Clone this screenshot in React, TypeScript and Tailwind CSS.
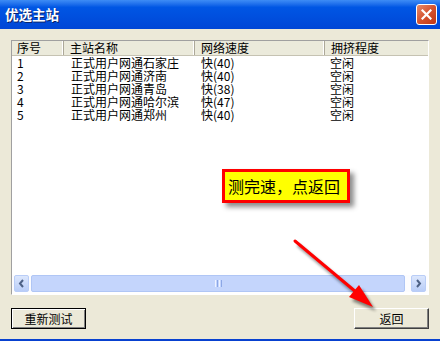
import React from "react";

const rows = [
  { id: "1", name: "正式用户网通石家庄", speed: "快(40)", load: "空闲" },
  { id: "2", name: "正式用户网通济南", speed: "快(40)", load: "空闲" },
  { id: "3", name: "正式用户网通青岛", speed: "快(38)", load: "空闲" },
  { id: "4", name: "正式用户网通哈尔滨", speed: "快(47)", load: "空闲" },
  { id: "5", name: "正式用户网通郑州", speed: "快(40)", load: "空闲" },
];

const cols = "grid grid-cols-[52px_131px_130px_1fr]";

const App: React.FC = () => {
  return (
    <div className="relative w-[440px] h-[341px] overflow-hidden bg-[#ece9d8] font-['SimSun','Noto_Sans_CJK_SC',sans-serif] text-[12px] text-black">
      {/* Title bar */}
      <div className="h-[29px] flex items-center justify-between pl-[5px] pr-[3px] bg-linear-to-b from-[#3d8cf5] via-[#0056e4] via-25% to-[#0046d6]">
        <span className="text-white font-bold text-[13.5px] leading-none [text-shadow:1px_1px_0_#0a246a]">
          优选主站
        </span>
        <div className="w-[21px] h-[21px] rounded-[3px] border border-white bg-linear-to-br from-[#e58a69] via-[#d5522e] to-[#c03512] flex items-center justify-center">
          <svg width="11" height="11" viewBox="0 0 11 11">
            <path d="M1.5 1.5 L9.5 9.5 M9.5 1.5 L1.5 9.5" stroke="white" strokeWidth="2.2" strokeLinecap="square" />
          </svg>
        </div>
      </div>

      {/* Body */}
      <div className="flex flex-col px-[11px] pt-[11px]">
        {/* List */}
        <div className="h-[255px] w-[418px] flex flex-col border border-t-[#a0a0a0] border-l-[#a0a0a0] border-r-white border-b-white bg-white">
          <div className={`${cols} h-[15px] bg-[#ebeadb] border-b border-[#c5c2b2]`}>
            {["序号", "主站名称", "网络速度", "拥挤程度"].map((h, i) => (
              <div
                key={h}
                className={`flex items-center leading-none pb-[1px] ${i === 0 ? "pl-[5px]" : "pl-[6px]"} ${i < 3 ? "border-r border-r-[#aca899] shadow-[inset_-1px_0_0_#ffffff]" : ""}`}
              >
                {h}
              </div>
            ))}
          </div>
          <div className="flex flex-col">
            {rows.map((r) => (
              <div key={r.id} className={`${cols} h-[13px] leading-[13px]`}>
                <div className="pl-[5px]">{r.id}</div>
                <div className="pl-[7px]">{r.name}</div>
                <div className="pl-[6px]">{r.speed}</div>
                <div className="pl-[5px]">{r.load}</div>
              </div>
            ))}
          </div>
          <div className="flex-1" />
          {/* Horizontal scrollbar */}
          <div className="h-[17px] flex items-center gap-[2px] px-[2px] bg-[#fcfcfe] mb-[2px]">
            <div className="w-[15px] h-[17px] rounded-[2px] border border-[#b9cdf7] bg-linear-to-b from-[#dce7fd] to-[#b9cdf7] flex items-center justify-center">
              <svg width="7" height="9" viewBox="0 0 7 9">
                <path d="M5 1 L2 4.5 L5 8" fill="none" stroke="#4d6185" strokeWidth="2" />
              </svg>
            </div>
            <div className="w-[374px] h-[17px] rounded-[2px] border border-[#b0c6f5] bg-[#c4d5fc] flex items-center justify-center">
              <div className="flex gap-[1px]">
                <div className="w-[1px] h-[7px] bg-[#eef3ff]" />
                <div className="w-[1px] h-[7px] bg-[#8ca7e6]" />
                <div className="w-[1px] h-[7px] bg-[#eef3ff]" />
                <div className="w-[1px] h-[7px] bg-[#8ca7e6]" />
              </div>
            </div>
            <div className="flex-1" />
            <div className="w-[15px] h-[17px] rounded-[2px] border border-[#b9cdf7] bg-linear-to-b from-[#dce7fd] to-[#b9cdf7] flex items-center justify-center">
              <svg width="7" height="9" viewBox="0 0 7 9">
                <path d="M2 1 L5 4.5 L2 8" fill="none" stroke="#4d6185" strokeWidth="2" />
              </svg>
            </div>
          </div>
        </div>

        {/* Buttons */}
        <div className="flex justify-between mt-[13px]">
          <button className="w-[75px] h-[21px] border border-black bg-[#ece9d8] shadow-[inset_1px_1px_0_#ffffff,inset_-1px_-1px_0_#808080] text-[12px] leading-none">
            重新测试
          </button>
          <button className="w-[75px] h-[21px] border border-t-white border-l-white border-r-[#404040] border-b-[#404040] bg-[#ece9d8] shadow-[inset_-1px_-1px_0_#808080] text-[12px] leading-none">
            返回
          </button>
        </div>
      </div>

      {/* Bottom window frame */}
      <div className="absolute left-0 right-0 bottom-0 h-[2px] bg-[#0841d0]" />

      {/* Callout */}
      <div className="absolute left-[222px] top-[169px] w-[128px] h-[34px] border-[3px] border-[#ff0000] bg-[#ffff00] shadow-[4px_4px_5px_rgba(0,0,0,0.45)] flex items-center pl-[3px] text-[16px] leading-none">
        测完速，点返回
      </div>

      {/* Arrow */}
      <svg className="absolute inset-0 pointer-events-none" width="440" height="341" viewBox="0 0 440 341">
        <defs>
          <filter id="blur" x="-20%" y="-20%" width="140%" height="140%">
            <feGaussianBlur stdDeviation="1.8" />
          </filter>
        </defs>
        <g transform="translate(3,4)" filter="url(#blur)" opacity="0.45">
          <line x1="295" y1="241" x2="356" y2="292" stroke="#000" strokeWidth="3" />
          <polygon points="373,307 349,297 359,285" fill="#000" />
        </g>
        <line x1="295" y1="241" x2="356" y2="292" stroke="#ff0000" strokeWidth="3" strokeLinecap="round" />
        <polygon points="373,307 349,297 359,285" fill="#ff0000" />
      </svg>
    </div>
  );
};

export default App;
